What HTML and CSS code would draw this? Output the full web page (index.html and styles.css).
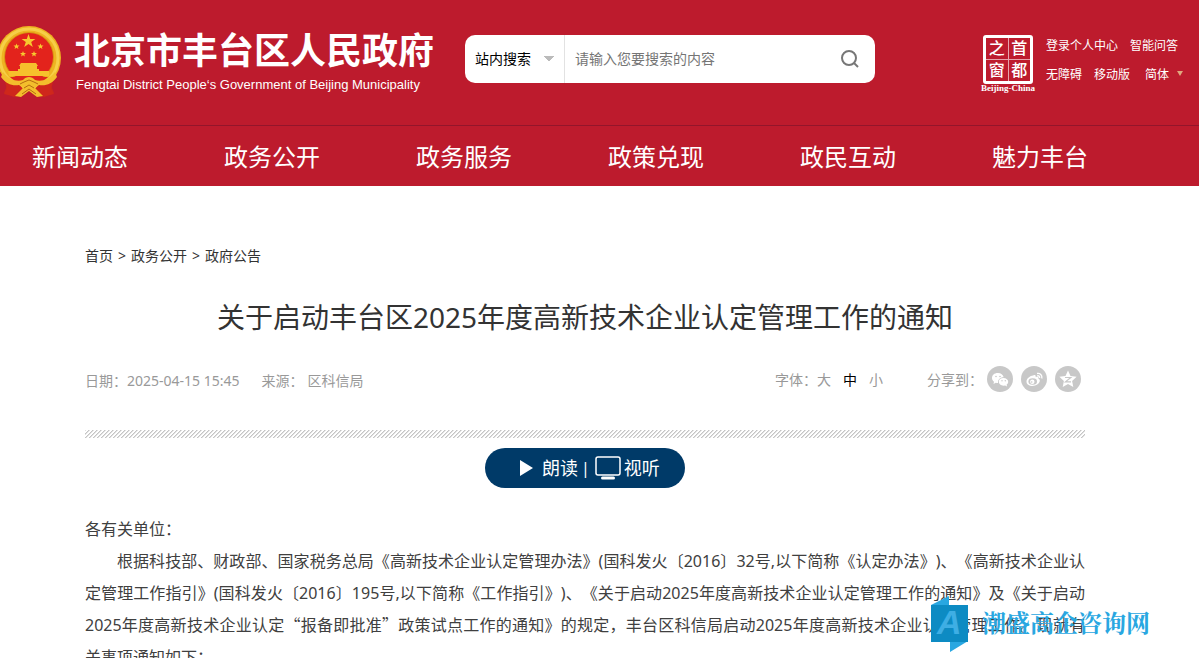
FILE: index.html
```html
<!DOCTYPE html>
<html lang="zh-CN">
<head>
<meta charset="utf-8">
<meta name="viewport" content="width=device-width, initial-scale=1">
<title>关于启动丰台区2025年度高新技术企业认定管理工作的通知</title>
<link rel="stylesheet" href="styles.css">
</head>
<body>
<header class="header">
  <div class="masthead">
    <a class="brand" href="#">
      <svg class="emblem" viewBox="0 0 61 72" aria-hidden="true">
        <path fill="#ca291c" d="M4 44l12 12-2 15-10-4 3-7zM54 44l-12 12 2 15 10-4-3-7z"/>
        <circle cx="29" cy="32" r="32" fill="#eeb321"/>
        <circle cx="29" cy="32" r="29" fill="none" stroke="#f6cf48" stroke-width="3"/>
        <circle cx="29" cy="31" r="25" fill="#d99313"/>
        <circle cx="29" cy="31" r="24" fill="#e3231c"/>
        <path fill="#f7c92f" d="M28.500 8l1.700 4.900h5.200l-4.200 3.100 1.600 5-4.300-3-4.300 3 1.600-5-4.200-3.100h5.200zM16.500 17.500l.8 2h2.200l-1.700 1.400.6 2.100-1.900-1.200-1.900 1.200.6-2.100-1.700-1.400h2.200zM40.500 17.500l.8 2h2.200l-1.700 1.400.6 2.100-1.900-1.200-1.900 1.200.6-2.100-1.700-1.400h2.200zM23 25l.8 2H26l-1.700 1.400.6 2.100L23 29.300l-1.900 1.200.6-2.100L20 27h2.200zM34 25l.8 2H37l-1.700 1.400.6 2.100-1.900-1.200-1.900 1.200.6-2.100L31 27h2.200z"/>
        <path fill="#f6c02c" d="M21 37h15l2 3H19zM20 40h17v3H20zM18 43h21v2H18zM8 45h41v5H9z"/>
        <path fill="#df251d" d="M10 51h38l-6 5H16z"/>
        <path fill="#cf271b" d="M5 56l14 2 5 6-8 7-12-3 3-5zM53 56l-14 2-5 6 8 7 12-3-3-5z"/>
        <path fill="#f3be2c" d="M3 46c6 8 14 10 20 8 3-4 9-4 12 0 6 2 14 0 20-8l2 5c-5 7-11 9-18 8l-4 3 8 8-6 1-8-6-8 6-6-1 8-8-4-3C12 60 6 58 1 51z"/>
        <path fill="none" stroke="#b66c10" d="M20 58l4-2 5-2 5 2 4 2M24 62l5-3 5 3M22 68l7-5 7 5"/>
      </svg>
      <span class="brand-text">
        <strong class="brand-name">北京市丰台区人民政府</strong>
        <span class="brand-en">Fengtai District People‘s Government of Beijing Municipality</span>
      </span>
    </a>
    <form class="search">
      <select class="search-scope" aria-label="搜索范围"><option>站内搜索</option></select>
      <input class="search-input" type="text" aria-label="搜索内容" placeholder="请输入您要搜索的内容">
      <button class="search-button" type="button" aria-label="搜索">
        <svg viewBox="0 0 20 20" width="20" height="20" fill="none" stroke="#777" stroke-width="2"><circle cx="9" cy="9" r="7"/><path d="M14 14l4 4"/></svg>
      </button>
    </form>
    <div class="tools">
      <a class="seal" href="#">
        <span class="seal-grid"><span>之</span><span>首</span><span>窗</span><span>都</span></span>
        <span class="seal-name">Beijing-China</span>
      </a>
      <div class="tool-rows">
        <div class="tool-row"><a href="#">登录个人中心</a><a href="#">智能问答</a></div>
        <div class="tool-row"><a href="#">无障碍</a><a href="#">移动版</a><a class="language" href="#">简体</a></div>
      </div>
    </div>
  </div>
  <nav class="nav">
    <a href="#">新闻动态</a><a href="#">政务公开</a><a href="#">政务服务</a><a href="#">政策兑现</a><a href="#">政民互动</a><a href="#">魅力丰台</a>
  </nav>
</header>
<main class="page">
  <div class="crumbs"><a href="#">首页</a><span>&gt;</span><a href="#">政务公开</a><span>&gt;</span><a href="#">政府公告</a></div>
  <h1 class="title">关于启动丰台区2025年度高新技术企业认定管理工作的通知</h1>
  <div class="meta">
    <div class="meta-info"><span>日期：2025-04-15 15:45</span><span class="source"><span>来源：</span><span>区科信局</span></span></div>
    <div class="font-size"><span>字体：</span><button type="button">大</button><button class="current" type="button">中</button><button type="button">小</button></div>
    <div class="share">
      <span>分享到：</span>
      <a href="#" aria-label="微信"><svg viewBox="0 0 26 26"><circle cx="13" cy="13" r="13" fill="#c8c8c8"/><path fill="#fff" d="M11 7c-4 0-6 2.200-6 5 0 1.600.8 2.800 2 3.700L6.500 18l2.300-1.200c.9.200 1.500.3 2.300.3-.5-3.200 1.800-5.800 5.600-5.800C16 8.600 14 7 11 7z"/><path fill="#fff" d="M16.500 12c-3 0-4.700 1.700-4.700 3.800s1.900 3.900 4.700 3.900l1.600-.2 2 1-.5-1.800c1-.7 1.600-1.700 1.600-2.900 0-2-1.900-3.800-4.700-3.800z"/><g fill="#c8c8c8"><circle cx="9" cy="10.500" r=".8"/><circle cx="13" cy="10.500" r=".8"/><circle cx="15" cy="14.800" r=".7"/><circle cx="18.300" cy="14.800" r=".7"/></g></svg></a>
      <a href="#" aria-label="微博"><svg viewBox="0 0 26 26"><circle cx="13" cy="13" r="13" fill="#c8c8c8"/><path fill="#fff" d="M12 9.500c1.300-.9 3-.8 2.700 1.500 2-.6 3.300 0 2.700 1.700 1.100.4 1.600 1.200 1.400 2.400-.5 2.900-3.800 4.900-7.300 4.900-3.400 0-6-1.700-6-4.500 0-3 3.800-5.800 6.500-6z"/><ellipse cx="11.700" cy="15.500" rx="4.300" ry="3.200" fill="#c8c8c8"/><circle cx="11.300" cy="15.700" r="2.200" fill="#fff"/><circle cx="10.700" cy="16" r=".8" fill="#c8c8c8"/><path d="M16 7.500c3-.6 5.500 1.500 4.800 5M16.200 9.800c1.700-.3 2.700.7 2.400 2.200" fill="none" stroke="#fff" stroke-width="1.300"/></svg></a>
      <a href="#" aria-label="QQ空间"><svg viewBox="0 0 26 26"><circle cx="13" cy="13" r="13" fill="#c8c8c8"/><path fill="#fff" d="M13 4.500l2.500 5.600 6.100.7-4.500 4.100 1.200 6.100-5.300-3.100L7.700 21l1.200-6.100-4.500-4.100 6.100-.7z"/><path fill="none" stroke="#c8c8c8" stroke-width="1.200" d="M10 11.500h5.800l-5.300 4.300h5.500"/></svg></a>
    </div>
  </div>
  <div class="stripes"></div>
  <button class="listen" type="button">
    <svg viewBox="0 0 14 18" width="14" height="18"><path fill="#fff" d="M1 1l13 8-13 8z"/></svg>
    <span>朗读</span><span class="listen-bar">|</span>
    <svg viewBox="0 0 26 24" width="26" height="24"><rect x="1" y="1" width="24" height="18" rx="2" fill="none" stroke="#fff" stroke-width="1.500"/><rect x="6" y="20.500" width="14" height="3" rx="1.500" fill="#fff"/></svg>
    <span>视听</span>
  </button>
  <article class="article">
    <p>各有关单位：</p>
    <p class="indent">根据科技部、财政部、国家税务总局《高新技术企业认定管理办法》(国科发火〔2016〕32号,以下简称《认定办法》)、《高新技术企业认定管理工作指引》(国科发火〔2016〕195号,以下简称《工作指引》)、《关于启动2025年度高新技术企业认定管理工作的通知》及《关于启动2025年度高新技术企业认定<span class="quote">“</span>报备即批准<span class="quote">”</span>政策试点工作的通知》的规定，丰台区科信局启动2025年度高新技术企业认定管理工作。现就有关事项通知如下：</p>
  </article>
</main>
<div class="watermark">
  <svg viewBox="0 0 38 56" width="38" height="56"><path fill="#29a7e1" d="M1 9L19 0v10H1zM20 45h18L20 56z"/><path fill="#0d8bc3" d="M1 9h37v37H1z"/><text class="watermark-letter" x="7" y="38">A</text></svg>
  <span>潮盛高企咨询网</span>
</div>
</body>
</html>
```

FILE: styles.css
```css
* {
  box-sizing: border-box;
}

body {
  position: relative;
  height: 100vh;
  margin: 0;
  overflow: hidden;
  background: #fff;
  color: #333;
  font: 14px/20px "Noto Sans", "Noto Sans CJK SC", sans-serif;
  text-spacing-trim: space-all;
}

a {
  color: inherit;
  text-decoration: none;
}

button,
input,
select {
  margin: 0;
  padding: 0;
  border: 0;
  background: none;
  color: inherit;
  font: inherit;
}

svg {
  display: block;
  flex: none;
}

.header {
  background: #bd1b2d;
  color: #fff;
}

.masthead {
  display: flex;
  align-items: flex-start;
  height: 126px;
  padding-right: 16px;
  border-bottom: 1px solid #93152b;
}

.brand {
  display: flex;
  gap: 13px;
  flex: none;
  width: 465px;
  padding-top: 26px;
}

.emblem {
  width: 61px;
  height: 72px;
}

.brand-text {
  display: flex;
  flex-direction: column;
  white-space: nowrap;
}

.brand-name {
  padding-top: 1px;
  font-size: 36px;
  font-weight: 700;
  line-height: 48px;
}

.brand-en {
  padding-left: 2px;
  font-family: "Liberation Sans", Arial, sans-serif;
  font-size: 13px;
  line-height: 20px;
}

.search {
  display: flex;
  flex: 0 1 410px;
  height: 48px;
  margin-top: 35px;
  overflow: hidden;
  border-radius: 10px;
  background: #fff;
}

.search-scope {
  flex: none;
  width: 100px;
  padding-left: 10px;
  border-right: 1px solid #e2e2e2;
  border-radius: 0;
  appearance: none;
  background-image: linear-gradient(to bottom left, #bbb 50%, transparent 50%), linear-gradient(to bottom right, #bbb 50%, transparent 50%);
  background-position: 78px 21px, 84px 21px;
  background-repeat: no-repeat;
  background-size: 6px 6px;
  color: #000;
}

.search-input {
  flex: 1;
  min-width: 0;
  padding-left: 10px;
  color: #333;
}

.search-input::placeholder {
  color: #757575;
}

.search-button {
  display: grid;
  place-items: center;
  width: 50px;
}

.tools {
  display: flex;
  gap: 10px;
  margin-left: auto;
  padding-top: 35px;
}

.seal {
  display: flex;
  flex-direction: column;
  align-items: center;
  width: 56px;
}

.seal-grid {
  display: grid;
  grid-template-columns: 1fr 1fr;
  gap: 5px;
  width: 50px;
  height: 49px;
  padding: 2px;
  border: 3px solid #fff;
  border-radius: 3px;
  background: linear-gradient(#e6a3ab, #e6a3ab) center / 1px 100% no-repeat, linear-gradient(#e6a3ab, #e6a3ab) center / 100% 1px no-repeat;
  font-size: 16px;
  font-weight: 500;
  line-height: 17px;
  text-align: center;
}

.seal-name {
  font: bold 9px/8px "Liberation Serif", serif;
  white-space: nowrap;
}

.tool-rows {
  display: grid;
  gap: 9px;
  align-content: start;
  width: 137px;
  padding-top: 1px;
  font-size: 12px;
}

.tool-row {
  display: flex;
  gap: 12px;
  white-space: nowrap;
}

.language {
  display: flex;
  gap: 8px;
  padding-left: 3px;
}

.language::after {
  content: "";
  height: 6px;
  margin-top: 6px;
  border: 3px solid transparent;
  border-top: 5px solid #e0a87e;
}

.nav {
  display: flex;
  gap: 96px;
  padding: 1px 32px 0;
  font-size: 24px;
  line-height: 59px;
  white-space: nowrap;
}

.page {
  padding: 60px 114px 0 85px;
}

.crumbs {
  display: flex;
  gap: 5px;
}

.title {
  margin: 31px 0 0;
  font-size: 28px;
  font-weight: 400;
  line-height: 40px;
  text-align: center;
}

.meta {
  display: flex;
  align-items: center;
  height: 32px;
  margin-top: 26px;
  color: #999;
}

.meta-info {
  display: flex;
  gap: 22px;
  flex: 1;
  padding-top: 4px;
}

.source {
  display: flex;
  gap: 4px;
}

.font-size {
  display: flex;
  gap: 12px;
  margin-right: 44px;
  padding-top: 1px;
}

.font-size span {
  margin-right: -12px;
}

.font-size .current {
  color: #000;
}

.share {
  display: flex;
  align-items: center;
  gap: 8px;
  margin-right: 4px;
}

.share span {
  margin-right: -4px;
  padding-top: 2px;
}

.share svg {
  width: 26px;
  height: 26px;
}

.stripes {
  height: 8px;
  margin-top: 35px;
  background: linear-gradient(135deg, #c4c4c4 12%, #fff 13% 49%, #c4c4c4 50% 62%, #fff 63%) 0 0 / 4px 4px;
}

.listen {
  display: flex;
  align-items: center;
  gap: 3px;
  width: 200px;
  height: 40px;
  margin: 10px auto 0;
  padding-left: 34px;
  border-radius: 20px;
  background: #003a68;
  color: #fff;
  font-size: 18px;
}

.listen svg + span:first-of-type {
  margin-left: 6px;
}

.listen-bar {
  margin-right: 2px;
  font-size: 16px;
}

.article {
  margin-top: 25px;
  color: #404040;
  font-size: 16px;
  line-height: 32px;
}

.article p {
  margin: 0;
}

.article .indent {
  text-align: justify;
  text-indent: 2em;
}

.quote {
  font-family: "Noto Sans CJK SC", sans-serif;
  line-height: 16px;
}

.watermark {
  position: absolute;
  right: 49px;
  bottom: 6px;
  display: flex;
  align-items: center;
  gap: 14px;
  color: #29a7e1;
  font: 700 24px/32px "Noto Serif CJK SC", "Noto Sans CJK SC", serif;
}

.watermark span {
  padding-bottom: 4px;
}

.watermark-letter {
  fill: #3eaee4;
  font: italic bold 34px "Liberation Sans", sans-serif;
}
```
